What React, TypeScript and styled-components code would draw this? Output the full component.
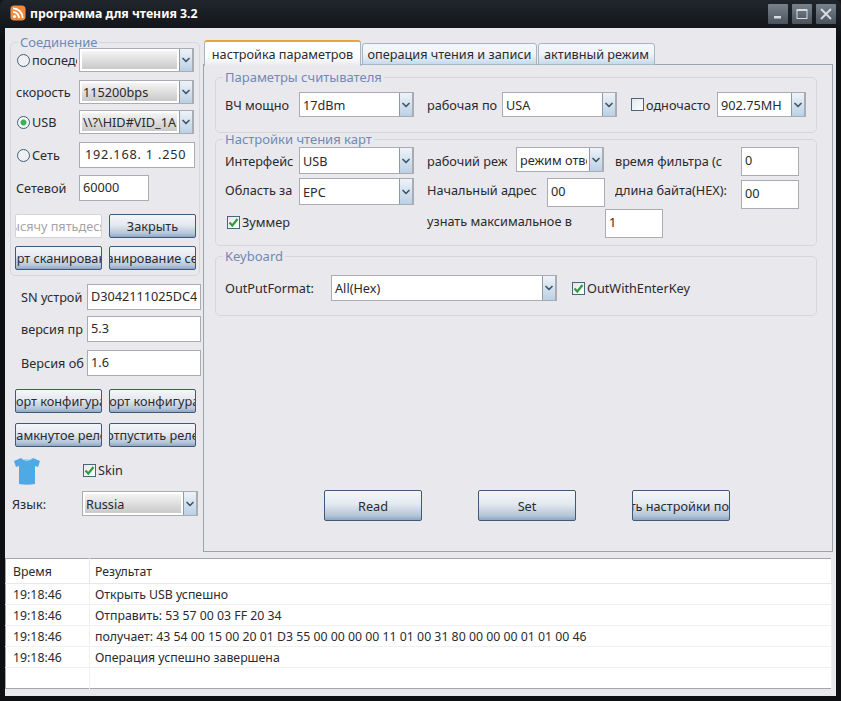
import { ChevronDown } from 'lucide-react'
import type { FC, ReactNode } from 'react'
import styled, { createGlobalStyle } from 'styled-components'

const LOG_ROWS = [
  ['19:18:46', 'Открыть USB успешно'],
  ['19:18:46', 'Отправить: 53 57 00 03 FF 20 34'],
  ['19:18:46', 'получает: 43 54 00 15 00 20 01 D3 55 00 00 00 00 11 01 00 31 80 00 00 00 01 01 00 46'],
  ['19:18:46', 'Операция успешно завершена'],
  ['', '']
]

const GlobalStyle = createGlobalStyle`
  html, body {
    margin: 0;
    padding: 0;
    background: #14171c;
  }
  * {
    box-sizing: border-box;
  }
`

const ComboBox: FC<{ width: number; height?: number; value: string; shaded?: boolean }> = ({
  width,
  height = 25,
  value,
  shaded
}) => (
  <Combo $w={width} $h={height}>
    <ComboValue $shaded={shaded}>{value}</ComboValue>
    <ComboArrow>
      <ChevronDown size={12} strokeWidth={3.5} />
    </ComboArrow>
  </Combo>
)

const Radio: FC<{ checked?: boolean }> = ({ checked }) => <RadioDot $checked={checked} />

const CheckBox: FC<{ checked?: boolean }> = ({ checked }) => (
  <CheckFrame>
    {checked && (
      <svg width="11" height="11" viewBox="0 0 11 11">
        <path d="M1.5 5.5 L4.3 8.5 L9.5 2" fill="none" stroke="#2f9e3f" strokeWidth="2.2" />
      </svg>
    )}
  </CheckFrame>
)

const ClipButton: FC<{ width?: number; height?: number; children: ReactNode }> = ({
  width = 87,
  height = 24,
  children
}) => (
  <Btn $w={width} $h={height}>
    <span>{children}</span>
  </Btn>
)

const App: FC = () => {
  return (
    <Frame>
      <GlobalStyle />
      <TitleBar>
        <svg width="16" height="16" viewBox="0 0 17 17">
          <rect x="0.5" y="0.5" width="16" height="16" rx="4" fill="#ee8a3c" />
          <circle cx="4.8" cy="12.2" r="1.7" fill="#fff" />
          <path d="M3.2 7.4 A6.4 6.4 0 0 1 9.6 13.8" fill="none" stroke="#fff" strokeWidth="2" />
          <path d="M3.2 3.6 A10.2 10.2 0 0 1 13.4 13.8" fill="none" stroke="#fff" strokeWidth="2" />
        </svg>
        <Title>программа для чтения 3.2</Title>
        <WindowButtons>
          <WinButton>
            <svg width="10" height="10" viewBox="0 0 10 10">
              <rect x="1" y="7" width="7" height="2.5" fill="#d7dade" />
            </svg>
          </WinButton>
          <WinButton>
            <svg width="12" height="12" viewBox="0 0 12 12">
              <rect x="1" y="1.5" width="10" height="9" fill="none" stroke="#d7dade" />
              <rect x="1" y="1" width="10" height="2" fill="#d7dade" />
            </svg>
          </WinButton>
          <WinButton>
            <svg width="14" height="14" viewBox="0 0 14 14">
              <path d="M2 2 L12 12 M12 2 L2 12" stroke="#d7dade" strokeWidth="2" />
            </svg>
          </WinButton>
        </WindowButtons>
      </TitleBar>

      <Body>
        <Main>
          <LeftColumn>
            <ConnectionGroup>
              <GroupLegend>Соединение</GroupLegend>
              <Row $pl={6} $mt={-1} $gap={2}>
                <Radio />
                <Label $w={45}>последовательный</Label>
                <ComboBox width={115} height={24} value="" shaded />
              </Row>
              <Row $pl={5} $mt={8}>
                <Label $w={63}>скорость</Label>
                <ComboBox width={115} height={24} value="115200bps" shaded />
              </Row>
              <Row $pl={6} $mt={6} $gap={2}>
                <Radio checked />
                <Label $w={45}>USB</Label>
                <ComboBox width={115} height={24} value="\\?\HID#VID_1A" shaded />
              </Row>
              <Row $pl={6} $mt={8} $gap={2}>
                <Radio />
                <Label $w={45}>Сеть</Label>
                <IpField readOnly value="192.168. 1 .250" />
              </Row>
              <Row $pl={5} $mt={7}>
                <Label $w={63}>Сетевой</Label>
                <Field $w={70} $h={26} readOnly value="60000" />
              </Row>
              <Row $pl={4} $mt={13} $gap={7}>
                <DisabledField>тысячу пятьдесят</DisabledField>
                <ClipButton>Закрыть</ClipButton>
              </Row>
              <Row $pl={4} $mt={8} $gap={7}>
                <ClipButton>Старт сканирования</ClipButton>
                <ClipButton>сканирование сети</ClipButton>
              </Row>
            </ConnectionGroup>

            <InfoRows>
              <Row $pl={11}>
                <Label $w={66}>SN устрой</Label>
                <Field $w={114} $h={26} readOnly value="D3042111025DC4" />
              </Row>
              <Row $pl={11} $mt={6}>
                <Label $w={66}>версия пр</Label>
                <Field $w={114} $h={26} readOnly value="5.3" />
              </Row>
              <Row $pl={11} $mt={8}>
                <Label $w={66}>Версия об</Label>
                <Field $w={114} $h={26} readOnly value="1.6" />
              </Row>
              <Row $pl={5} $mt={13} $gap={7}>
                <ClipButton>Экспорт конфигурации</ClipButton>
                <ClipButton>Импорт конфигурации</ClipButton>
              </Row>
              <Row $pl={5} $mt={10} $gap={7}>
                <ClipButton>замкнутое реле</ClipButton>
                <ClipButton>отпустить реле</ClipButton>
              </Row>
              <SkinRow>
                <svg width="28" height="28" viewBox="0 0 28 28">
                  <path
                    d="M8 1 C11 3 17 3 20 1 L27 4 L25 10 L22 9 L22 27 C17 28 11 28 6 27 L6 9 L3 10 L1 4 Z"
                    fill="#4fa9e4"
                  />
                  <path d="M8 1 C11 4.5 17 4.5 20 1 L18.5 1.5 C16 3 12 3 9.5 1.5 Z" fill="#bfe3f7" />
                </svg>
                <CheckLabel $mt={-2}>
                  <CheckBox checked />
                  Skin
                </CheckLabel>
              </SkinRow>
              <Row $pl={2} $mt={6}>
                <Label $w={70}>Язык:</Label>
                <ComboBox width={116} value="Russia" shaded />
              </Row>
            </InfoRows>
          </LeftColumn>

          <RightColumn>
            <TabBar>
              <Tab $active $w={157}>настройка параметров</Tab>
              <Tab $w={175}>операция чтения и записи</Tab>
              <Tab $w={117}>активный режим</Tab>
            </TabBar>
            <TabPanel>
              <SettingsGroup $pt={8} $h={63}>
                <GroupLegend>Параметры считывателя</GroupLegend>
                <Row $pl={9}>
                  <Label $w={74}>ВЧ мощно</Label>
                  <ComboBox width={115} value="17dBm" />
                  <Label $w={75} $ml={13}>рабочая по</Label>
                  <ComboBox width={115} value="USA" />
                  <CheckLabel $ml={14}>
                    <CheckBox />
                    <Label $w={71}>одночасто</Label>
                  </CheckLabel>
                  <ComboBox width={89} value="902.75MH" />
                </Row>
              </SettingsGroup>

              <SettingsGroup $pt={1} $h={114} $mt={-1}>
                <GroupLegend>Настройки чтения карт</GroupLegend>
                <Row $pl={9} $h={28} $align="flex-start">
                  <Label $w={74} $mt={5}>Интерфейс</Label>
                  <ComboBox width={115} height={27} value="USB" />
                  <Label $w={89} $ml={13} $mt={5}>рабочий реж</Label>
                  <ComboBox width={88} value="режим ответа" />
                  <Label $w={126} $ml={11} $mt={5}>время фильтра (с</Label>
                  <Field $w={58} $h={29} readOnly value="0" />
                </Row>
                <Row $pl={9} $h={31} $mt={3} $align="flex-start">
                  <Label $w={74} $mt={3}>Область за</Label>
                  <ComboBox width={115} height={27} value="EPC" />
                  <Label $w={120} $ml={13} $mt={3}>Начальный адрес</Label>
                  <Field $w={58} $h={29} readOnly value="00" />
                  <Label $w={126} $ml={10} $mt={3}>длина байта(HEX):</Label>
                  <Field $w={58} $h={29} $mt={2} readOnly value="00" />
                </Row>
                <Row $pl={9} $align="flex-start">
                  <CheckLabel $w={200} $ml={2} $mt={4}>
                    <CheckBox checked />
                    Зуммер
                  </CheckLabel>
                  <Label $w={178} $mt={3}>узнать максимальное в</Label>
                  <Field $w={58} $h={29} readOnly value="1" />
                </Row>
              </SettingsGroup>

              <SettingsGroup $pt={12} $h={67} $mt={3}>
                <GroupLegend>Keyboard</GroupLegend>
                <Row $pl={9}>
                  <Label $w={106}>OutPutFormat:</Label>
                  <ComboBox width={226} height={26} value="All(Hex)" />
                  <CheckLabel $ml={15}>
                    <CheckBox checked />
                    OutWithEnterKey
                  </CheckLabel>
                </Row>
              </SettingsGroup>

              <ActionBar>
                <ClipButton width={98} height={31}>Read</ClipButton>
                <ClipButton width={98} height={31}>Set</ClipButton>
                <ClipButton width={98} height={31}>Восстановить настройки по умолчанию</ClipButton>
              </ActionBar>
            </TabPanel>
          </RightColumn>
        </Main>

        <LogTable>
          <colgroup>
            <col width={84} />
            <col />
          </colgroup>
          <thead>
            <tr>
              <HeadCell>Время</HeadCell>
              <HeadCell>Результат</HeadCell>
            </tr>
          </thead>
          <tbody>
            {LOG_ROWS.map(([time, text], i) => (
              <tr key={i}>
                <LogCell>{time}</LogCell>
                <LogCell>{text}</LogCell>
              </tr>
            ))}
          </tbody>
        </LogTable>
      </Body>
    </Frame>
  )
}

const Frame = styled.div`
  width: 841px;
  height: 701px;
  display: flex;
  flex-direction: column;
  padding: 0 5px 5px;
  background: linear-gradient(#20262c, #0d0f13 40px);
  border-radius: 6px 6px 0 0;
  font-family: 'Noto Sans', 'Liberation Sans', sans-serif;
  font-size: 12.7px;
  color: #2a2a2e;
  overflow: hidden;
`

const TitleBar = styled.div`
  height: 28px;
  flex: none;
  display: flex;
  align-items: center;
  padding: 0 0 2px 5px;
`

const Title = styled.div`
  margin-left: 4px;
  font-size: 12.3px;
  font-weight: 700;
  color: #fff;
`

const WindowButtons = styled.div`
  margin-left: auto;
  display: flex;
  gap: 4px;
  margin-top: 2px;
`

const WinButton = styled.div`
  width: 20px;
  height: 20px;
  display: flex;
  align-items: center;
  justify-content: center;
  border-radius: 1px;
  background: linear-gradient(#78828c, #4a535c);
`

const Body = styled.div`
  flex: 1;
  min-height: 0;
  display: flex;
  flex-direction: column;
  background: #e9e8ed;
`

const Main = styled.div`
  height: 524px;
  flex: none;
  display: flex;
`

const LeftColumn = styled.div`
  width: 198px;
  flex: none;
  padding: 7px 0 0 5px;
`

const RightColumn = styled.div`
  width: 630px;
  flex: none;
  display: flex;
  flex-direction: column;
  padding-top: 12px;
`

const GroupBase = styled.fieldset`
  margin: 0;
  min-width: 0;
  border: 1px solid #d6d6dc;
  border-radius: 5px;
`

const ConnectionGroup = styled(GroupBase)`
  width: 190px;
  height: 241px;
  padding: 0;
`

const GroupLegend = styled.legend`
  margin-left: 7px;
  padding: 0 2px;
  font-size: 13px;
  line-height: 14px;
  color: #6f8ab5;
`

const SettingsGroup = styled(GroupBase)<{ $pt: number; $h: number; $mt?: number }>`
  width: 602px;
  height: ${(p) => p.$h}px;
  margin-top: ${(p) => p.$mt ?? 0}px;
  flex: none;
  padding: ${(p) => p.$pt}px 0 0;
`

const InfoRows = styled.div`
  margin-top: 8px;
`

const Row = styled.div<{ $pl?: number; $mt?: number; $gap?: number; $h?: number; $align?: string }>`
  display: flex;
  align-items: ${(p) => p.$align ?? 'center'};
  padding-left: ${(p) => p.$pl ?? 0}px;
  margin-top: ${(p) => p.$mt ?? 0}px;
  gap: ${(p) => p.$gap ?? 0}px;
  ${(p) => (p.$h ? `height: ${p.$h}px;` : '')}
`

const SkinRow = styled.div`
  display: flex;
  align-items: center;
  gap: 42px;
  padding-left: 3px;
  margin-top: 10px;
  height: 28px;
`

const Label = styled.span<{ $w: number; $ml?: number; $mt?: number }>`
  flex: none;
  width: ${(p) => p.$w}px;
  margin-left: ${(p) => p.$ml ?? 0}px;
  margin-top: ${(p) => p.$mt ?? 0}px;
  line-height: 18px;
  white-space: nowrap;
  overflow: hidden;
`

const CheckLabel = styled.span<{ $w?: number; $ml?: number; $mt?: number }>`
  flex: none;
  display: flex;
  align-items: center;
  gap: 2px;
  line-height: 18px;
  ${(p) => (p.$w ? `width: ${p.$w}px;` : '')}
  margin-left: ${(p) => p.$ml ?? 0}px;
  margin-top: ${(p) => p.$mt ?? 0}px;
`

const CheckFrame = styled.span`
  width: 13px;
  height: 13px;
  flex: none;
  display: flex;
  align-items: center;
  justify-content: center;
  border: 1px solid #4a6478;
  background: linear-gradient(135deg, #e4e6ea, #ffffff);
`

const RadioDot = styled.span<{ $checked?: boolean }>`
  width: 13px;
  height: 13px;
  flex: none;
  border-radius: 50%;
  border: 1.5px solid #3f6178;
  background: ${(p) => (p.$checked ? 'radial-gradient(circle, #3fae55 0 2.5px, #f4f6f8 3.5px)' : '#eef0f4')};
`

const Combo = styled.div<{ $w: number; $h: number }>`
  width: ${(p) => p.$w}px;
  height: ${(p) => p.$h}px;
  flex: none;
  display: flex;
  background: #fff;
  border: 1px solid #a9adb3;
  overflow: hidden;
`

const ComboValue = styled.div<{ $shaded?: boolean }>`
  flex: 1;
  min-width: 0;
  margin: 2px;
  padding-left: 1px;
  display: flex;
  align-items: center;
  white-space: nowrap;
  overflow: hidden;
  background: ${(p) => (p.$shaded ? 'linear-gradient(#f4f4f4, #c9c9c9)' : 'transparent')};
`

const ComboArrow = styled.div`
  width: 14px;
  flex: none;
  display: flex;
  align-items: center;
  justify-content: center;
  color: #44586c;
  border-left: 1px solid #8e9aa6;
  border-right: 1px solid #a9adb3;
  background: linear-gradient(#eef3f8, #bcd0e4);
`

const Field = styled.input<{ $w: number; $h: number; $mt?: number }>`
  width: ${(p) => p.$w}px;
  height: ${(p) => p.$h}px;
  margin-top: ${(p) => p.$mt ?? 0}px;
  flex: none;
  padding: 0 3px 3px;
  border: 1px solid #a9adb3;
  background: #fff;
  font: inherit;
  color: inherit;
  outline: none;
`

const IpField = styled.input`
  width: 116px;
  height: 26px;
  flex: none;
  padding: 0 5px 2px;
  border: 1px solid #a9adb3;
  background: #fff;
  font: inherit;
  letter-spacing: 0.8px;
  color: inherit;
  outline: none;
`

const DisabledField = styled.div`
  width: 87px;
  height: 24px;
  flex: none;
  display: flex;
  align-items: center;
  justify-content: center;
  border: 1px solid #d4d4d8;
  border-radius: 2px;
  background: #fff;
  color: #a4a4a8;
  white-space: nowrap;
  overflow: hidden;
`

const Btn = styled.div<{ $w: number; $h: number }>`
  width: ${(p) => p.$w}px;
  height: ${(p) => p.$h}px;
  flex: none;
  display: flex;
  align-items: center;
  justify-content: center;
  border: 1px solid #3f5a78;
  border-radius: 2px;
  background: linear-gradient(#f4f6f9 0%, #e4e9f0 45%, #b4c4d8 85%, #8ea6c2 100%);
  white-space: nowrap;
  overflow: hidden;

  span {
    flex: none;
  }
`

const TabBar = styled.div`
  height: 25px;
  flex: none;
  display: flex;
  align-items: flex-end;
  gap: 1px;
  padding-left: 1px;
  position: relative;
  z-index: 1;
  margin-bottom: -1px;
`

const Tab = styled.div<{ $active?: boolean; $w: number }>`
  width: ${(p) => p.$w}px;
  height: ${(p) => (p.$active ? 26 : 22)}px;
  margin-bottom: ${(p) => (p.$active ? -1 : 0)}px;
  flex: none;
  display: flex;
  align-items: center;
  justify-content: center;
  white-space: nowrap;
  overflow: hidden;
  border-radius: 3px 3px 0 0;
  border: 1px solid #a7b6c4;
  ${(p) =>
    p.$active
      ? 'border-top: 2px solid #e9a23c; border-bottom: none; background: #fff linear-gradient(#ffffff 60%, #e9e8ed);'
      : 'background: linear-gradient(#f4f7fa, #f0f3f7 50%, #c6daee);'}
`

const TabPanel = styled.div`
  height: 488px;
  flex: none;
  display: flex;
  flex-direction: column;
  padding: 5px 0 0 11px;
  border: 1px solid #98a5ae;
`

const ActionBar = styled.div`
  margin-top: auto;
  display: flex;
  gap: 56px;
  padding: 0 0 30px 109px;
`

const LogTable = styled.table`
  width: 827px;
  height: 131px;
  margin-top: 6px;
  border: 1px solid #a5a5a8;
  border-collapse: collapse;
  table-layout: fixed;
  background: #fff;
`

const HeadCell = styled.th`
  height: 25px;
  padding: 0 0 0 5px;
  text-align: left;
  font-weight: 400;
  font-size: 12.3px;
  border-bottom: 1px solid #e8e8ea;
  border-right: 1px solid #e8e8ea;

  &:first-child {
    padding-left: 7px;
  }
`

const LogCell = styled.td`
  height: 21px;
  padding: 0 0 0 5px;
  font-size: 12.3px;
  white-space: nowrap;
  border-bottom: 1px solid #f0f0f2;
  border-right: 1px solid #f0f0f2;

  &:first-child {
    padding-left: 7px;
  }

  tr:last-child & {
    border-bottom: none;
  }
`

export default App
